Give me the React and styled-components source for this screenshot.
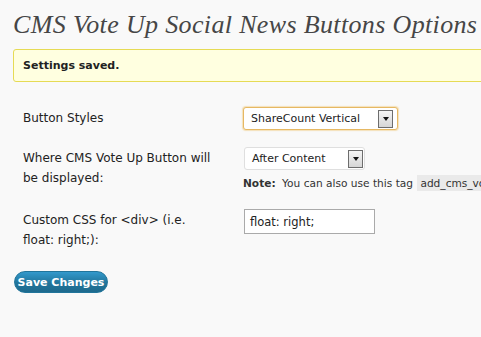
import React from 'react'
import styled, { createGlobalStyle } from 'styled-components'

const GlobalStyle = createGlobalStyle`
  html, body {
    margin: 0;
    padding: 0;
    background: #f9f9f9;
    overflow: hidden;
  }
  body {
    font-family: "DejaVu Sans", Verdana, sans-serif;
    font-size: 12px;
    color: #333;
  }
`

const Wrap = styled.div`
  padding: 0 0 0 13px;
  width: 520px;
`

const Title = styled.h2`
  margin: 0;
  padding: 10px 0 0;
  font-family: "Liberation Serif", Georgia, serif;
  font-style: italic;
  font-weight: normal;
  font-size: 26px;
  letter-spacing: 0.35px;
  line-height: 30px;
  color: #464646;
`

const Notice = styled.div`
  margin-top: 9px;
  height: 31px;
  display: flex;
  align-items: center;
  padding: 0 9px;
  background: #ffffe0;
  border: 1px solid #e6db55;
  border-radius: 3px;
  font-weight: bold;
  font-size: 11px;
  color: #222;
`

const Form = styled.div`
  margin-top: 17px;
`

const Row = styled.div`
  display: grid;
  grid-template-columns: 220px 1fr;
  padding: 9px 0;
`

const Label = styled.div`
  padding: 0 10px;
  line-height: 20px;
  font-size: 12px;
  color: #222;
  width: 196px;
`

const Field = styled.div`
  padding: 0 10px;
  white-space: nowrap;
`

const Select = styled.div`
  box-sizing: border-box;
  display: flex;
  align-items: center;
  justify-content: space-between;
  width: ${p => p.$width}px;
  height: 23px;
  margin-top: -1px;
  margin-left: ${p => (p.$focused ? 0 : 1)}px;
  padding: 0 ${p => (p.$focused ? 4 : 1)}px 0 7px;
  background: #fff;
  border: 1px solid ${p => (p.$focused ? '#e6b863' : '#dfdfdf')};
  border-radius: 3px;
  box-shadow: ${p => (p.$focused ? '0 0 1px 1px rgba(240, 200, 120, 0.5)' : 'none')};
  font-size: 11px;
  color: #222;
`

const ArrowBox = styled.span`
  box-sizing: border-box;
  width: 15px;
  height: 18px;
  border: 1px solid #6d6d6d;
  background: linear-gradient(#f4f4f4, #d6d6d6);
  display: flex;
  align-items: center;
  justify-content: center;
  &::after {
    content: '';
    border-left: 3.5px solid transparent;
    border-right: 3.5px solid transparent;
    border-top: 4px solid #111;
    margin-top: 1px;
  }
`

const Note = styled.div`
  margin-top: 4px;
  line-height: 18px;
  font-size: 10.6px;
  color: #333;
  b {
    color: #333;
    margin-right: 3px;
  }
`

const Code = styled.code`
  font-family: "DejaVu Sans", sans-serif;
  font-size: 10.6px;
  background: #eaeaea;
  padding: 2px 3px;
  margin-left: 1px;
  color: #333;
`

const TextInput = styled.div`
  box-sizing: border-box;
  width: 131px;
  height: 25px;
  margin-top: -1px;
  margin-left: 1px;
  display: flex;
  align-items: center;
  padding: 0 5px;
  background: #fff;
  border: 1px solid #aaa;
  font-size: 11.5px;
  color: #222;
`

const SaveButton = styled.button`
  margin: 12px 0 0 1px;
  height: 22px;
  width: 94px;
  padding: 0;
  border: 1px solid #21759b;
  border-radius: 11px;
  background: linear-gradient(#3399cc, #21759b 55%, #1e6a8d);
  color: #fff;
  font-family: "DejaVu Sans", sans-serif;
  font-weight: bold;
  font-size: 11px;
  cursor: pointer;
`

export default function App() {
  return (
    <>
      <GlobalStyle />
      <Wrap>
        <Title>CMS Vote Up Social News Buttons Options</Title>
        <Notice>Settings saved.</Notice>
        <Form>
          <Row>
            <Label>Button Styles</Label>
            <Field>
              <Select $width={155} $focused>
                ShareCount Vertical
                <ArrowBox />
              </Select>
            </Field>
          </Row>
          <Row>
            <Label>Where CMS Vote Up Button will be displayed:</Label>
            <Field>
              <Select $width={121}>
                After Content
                <ArrowBox />
              </Select>
              <Note>
                <b>Note:</b> You can also use this tag <Code>add_cms_voteup_buttons()</Code>
              </Note>
            </Field>
          </Row>
          <Row>
            <Label>Custom CSS for &lt;div&gt; (i.e. float: right;):</Label>
            <Field>
              <TextInput>float: right;</TextInput>
            </Field>
          </Row>
        </Form>
        <SaveButton>Save Changes</SaveButton>
      </Wrap>
    </>
  )
}
